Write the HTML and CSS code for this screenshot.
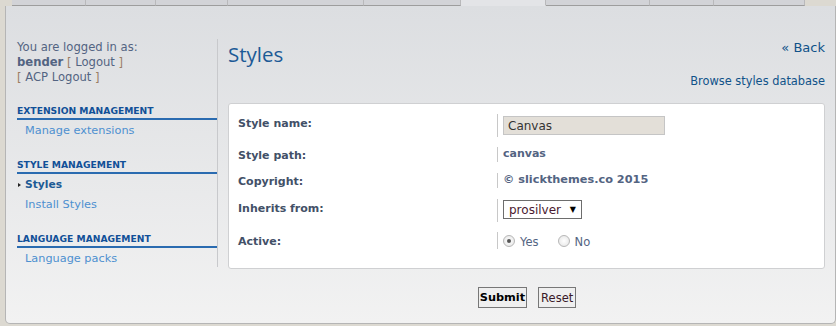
FILE: index.html
```html
<!DOCTYPE html>
<html lang="en">

<head>
    <meta charset="UTF-8">
    <title>Styles</title>
    <link rel="stylesheet" href="styles.css">
</head>

<body>
    <!-- tabs -->
    <ul class="tabs">
        <li style="width:73px"></li>
        <li style="width:69px"></li>
        <li style="width:71px"></li>
        <li style="width:135px"></li>
        <li style="width:96px"></li>
        <li class="active" style="width:84px"></li>
        <li style="width:103px"></li>
        <li style="width:63px"></li>
        <li style="width:90px"></li>
    </ul>
    <div class="panel">
        <div class="menu">
            <p class="user">You are logged in as:<br><b>bender</b> <span class="br">[</span> Logout <span class="br">]</span><br><span class="br">[</span> ACP Logout <span class="br">]</span></p>
            <h3 class="first">EXTENSION MANAGEMENT</h3>
            <ul>
                <li><a href="#">Manage extensions</a></li>
            </ul>
            <h3>STYLE MANAGEMENT</h3>
            <ul>
                <li class="on"><a href="#">Styles</a></li>
                <li><a href="#">Install Styles</a></li>
            </ul>
            <h3>LANGUAGE MANAGEMENT</h3>
            <ul>
                <li><a href="#">Language packs</a></li>
            </ul>
        </div>
        <div class="main">
            <div class="head">
                <h1>Styles</h1>
                <div class="links">
                    <a href="#" class="back">&laquo; Back</a>
                    <a href="#">Browse styles database</a>
                </div>
            </div>
            <div class="box">
                <dl class="r1">
                    <dt>Style name:</dt>
                    <dd><input type="text" value="Canvas"></dd>
                </dl>
                <dl class="r2">
                    <dt>Style path:</dt>
                    <dd><b>canvas</b></dd>
                </dl>
                <dl class="r3">
                    <dt>Copyright:</dt>
                    <dd><b class="big">&copy; slickthemes.co 2015</b></dd>
                </dl>
                <dl class="r4">
                    <dt>Inherits from:</dt>
                    <dd><span class="select">prosilver <i>&#9660;</i></span></dd>
                </dl>
                <dl class="r5">
                    <dt>Active:</dt>
                    <dd><label><span class="radio checked"></span>Yes</label><label><span class="radio"></span>No</label></dd>
                </dl>
            </div>
            <div class="btns">
                <button class="submit">Submit</button>
                <button class="reset">Reset</button>
            </div>
        </div>
    </div>
</body>

</html>
```

FILE: styles.css
```css
* {
    margin: 0;
    padding: 0;
}

li {
    list-style: none;
}

a {
    text-decoration: none;
}

body {
    background: #dcd9d1;
    font-family: "DejaVu Sans", Verdana, sans-serif;
    font-size: 11px;
    color: #536482;
    width: 836px;
    height: 326px;
    overflow: hidden;
}

.tabs {
    display: flex;
    height: 6px;
    margin-left: 12px;
}

.tabs li {
    height: 5px;
    background: #d2d3d7;
    border-right: 1px solid #b9b9bb;
    border-bottom: 1px solid #9d9d9d;
}

.tabs li.active {
    background: #e3e4e7;
    border-bottom-color: #e3e4e7;
}

.panel {
    display: flex;
    width: 818px;
    height: 278px;
    margin-left: 5px;
    padding: 33px 10px 6px 1px;
    border: 1px solid #b5b5b5;
    border-top: 0;
    border-radius: 0 0 5px 5px;
    background: linear-gradient(#dcdee1, #f2f2f2);
}

/* left menu */
.menu {
    width: 200px;
    height: 228px;
    margin-left: 10px;
    border-right: 1px solid #c8c9cc;
}

.user {
    margin-top: 1px;
    line-height: 15px;
    font-size: 11.6px;
    color: #536482;
}

.user b {
    color: #536482;
}

.user .br {
    color: #9b7d64;
}

.menu h3 {
    margin-top: 17px;
    padding-bottom: 1px;
    border-bottom: 2px solid #2a6bb0;
    font-size: 9.2px;
    color: #115098;
    line-height: 13px;
}

.menu h3.first {
    margin-top: 19px;
}

.menu ul {
    padding-top: 1px;
}

.menu ul li {
    line-height: 20px;
    height: 20px;
    padding-left: 8px;
    font-size: 11.3px;
}

.menu ul li a {
    color: #4d90d0;
}

.menu ul li.on {
    position: relative;
}

.menu ul li.on a {
    font-weight: bold;
    font-size: 10.7px;
    color: #1d5b95;
}

.menu ul li.on::before {
    content: "";
    position: absolute;
    left: 1px;
    top: 8px;
    border-left: 3px solid #222;
    border-top: 2px solid transparent;
    border-bottom: 2px solid transparent;
}

/* main */
.main {
    width: 597px;
    margin-left: 10px;
}

.head {
    display: flex;
    justify-content: space-between;
    height: 64px;
}

.head h1 {
    font-family: "Open Sans", "DejaVu Sans Condensed", sans-serif;
    font-weight: normal;
    font-size: 20.5px;
    color: #1c5a96;
    line-height: 28px;
    margin-top: 1px;
}

.links {
    display: flex;
    flex-direction: column;
    align-items: flex-end;
    color: #105289;
}

.links a {
    color: #105289;
    font-size: 11.4px;
}

.links .back {
    font-size: 13px;
    line-height: 18px;
    margin-bottom: 17px;
}

.box {
    height: 135px;
    padding: 10px 0 19px;
    background: #fff;
    border: 1px solid #cfd0d2;
    border-radius: 3px;
}

.box dl {
    display: flex;
    align-items: flex-start;
}

.box dt {
    width: 259px;
    padding-left: 9px;
    line-height: 14px;
    font-weight: bold;
    color: #425067;
}

.box dd {
    border-left: 1px solid #c8c8c8;
    padding-left: 5px;
    color: #536482;
    line-height: 14px;
}

.r1 { height: 33px; }
.r2 { height: 26px; }
.r3 { height: 26px; }
.r4 { height: 33px; }
.r5 { height: 17px; }

.r1 dt, .r4 dt, .r5 dt {
    padding-top: 3px;
}

.r2 dt, .r3 dt {
    padding-top: 2px;
}

.r1 dd, .r4 dd {
    height: 23px;
}

.r2 dd, .r3 dd {
    height: 15px;
}

.r5 dd {
    height: 17px;
    display: flex;
    align-items: flex-end;
}

.box input {
    width: 152px;
    height: 17px;
    margin-top: 2px;
    padding: 0 4px;
    border: 1px solid #c5c5c5;
    background: #e3dfd8;
    font-family: "DejaVu Sans", Verdana, sans-serif;
    font-size: 12px;
    color: #333;
}

.box b {
    font-size: 11px;
    color: #536482;
}

.box b.big {
    font-size: 11.3px;
}

.select {
    display: inline-block;
    width: 72px;
    height: 17px;
    margin-top: 1px;
    line-height: 17px;
    padding-left: 5px;
    border: 1px solid #6d6d6d;
    font-size: 12px;
    color: #4a1a30;
}

.select i {
    font-style: normal;
    font-size: 8px;
    color: #000;
    margin-left: 5px;
    vertical-align: 2px;
}

.box label {
    display: inline-flex;
    align-items: center;
    margin-right: 19px;
    font-size: 11.5px;
    line-height: 14px;
    color: #536482;
}

.radio {
    display: inline-block;
    width: 10px;
    height: 10px;
    margin-right: 5px;
    border: 1px solid #b7b7b7;
    border-radius: 50%;
    background: radial-gradient(#fff, #e3e3e3);
    position: relative;
    top: -1px;
}

.radio.checked::after {
    content: "";
    position: absolute;
    left: 3px;
    top: 3px;
    width: 4px;
    height: 4px;
    border-radius: 50%;
    background: #555;
}

.btns {
    display: flex;
    justify-content: center;
    gap: 11px;
    margin-top: 18px;
    padding-left: 1px;
}

.btns button {
    height: 21px;
    padding: 0 2px;
    border: 1px solid #777;
    background: #efefef;
    font-family: "DejaVu Sans", Verdana, sans-serif;
    font-size: 11.5px;
    color: #000;
}

.btns .submit {
    padding: 0 1px;
    font-weight: bold;
    font-size: 11.3px;
}

.btns .reset {
    color: #3a1a28;
}
```
